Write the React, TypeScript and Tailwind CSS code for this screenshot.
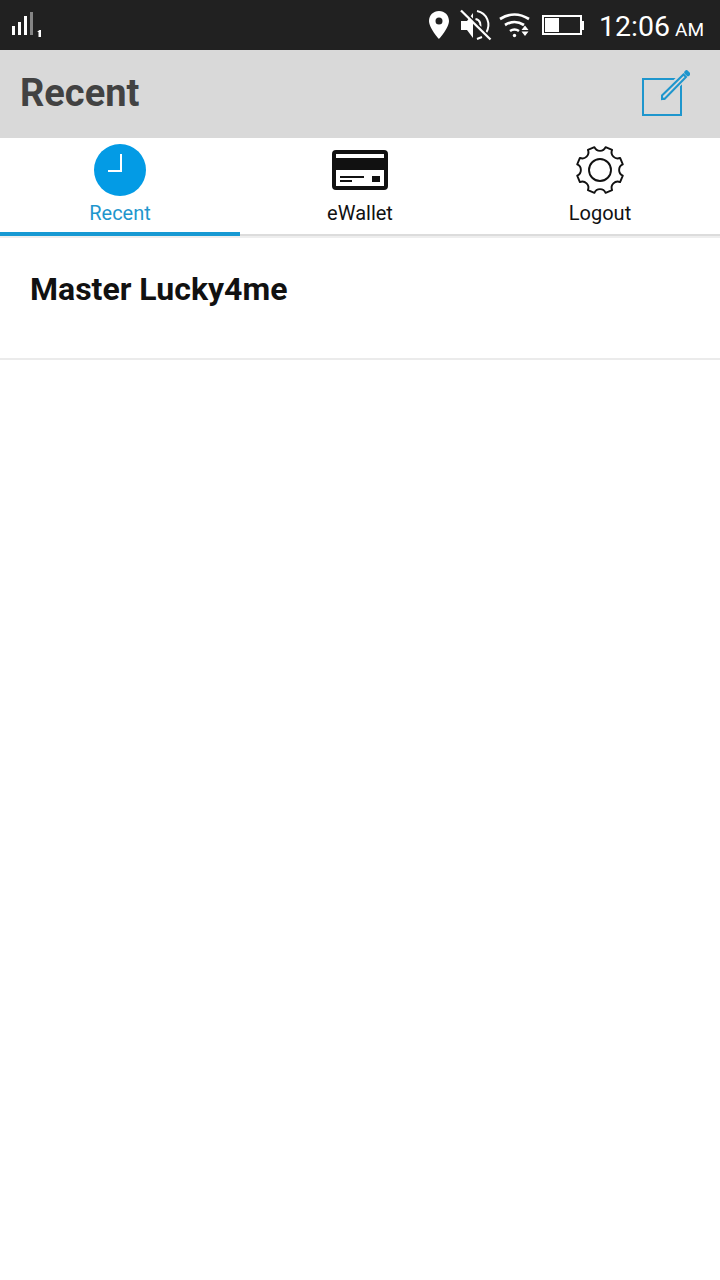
import React from 'react';

const ClockIcon = () => (
  <svg width="56" height="56" viewBox="0 0 56 56">
    <circle cx="28" cy="28" r="26" fill="#039be5" />
    <path d="M29 12v17H16" fill="none" stroke="#fff" strokeWidth="2" />
  </svg>
);

const CardIcon = () => (
  <svg width="56" height="56" viewBox="0 0 56 56" fill="#111">
    <rect x="2" y="10" width="52" height="36" rx="2" fill="#fff" stroke="#111" strokeWidth="4" />
    <path d="M3 16h50v12H3zM8 34h24v2H8zM8 38h12v2H8zM40 34h8v6h-8z" shapeRendering="crispEdges" />
  </svg>
);

const GearIcon = () => (
  <svg width="56" height="56" viewBox="0 0 56 56" fill="none" stroke="#111" strokeWidth="1.9" strokeLinejoin="round">
    <circle cx="28" cy="28" r="11" />
    <path d="M22.400 5.200A6.100 6.100 0 0 0 33.600 5.200L40.100 7.900A6.100 6.100 0 0 0 48.100 15.900L50.800 22.400A6.100 6.100 0 0 0 50.800 33.600L48.100 40.100A6.100 6.100 0 0 0 40.100 48.100L33.600 50.800A6.100 6.100 0 0 0 22.400 50.800L15.900 48.100A6.100 6.100 0 0 0 7.900 40.100L5.200 33.600A6.100 6.100 0 0 0 5.200 22.400L7.900 15.900A6.100 6.100 0 0 0 15.900 7.900Z" />
  </svg>
);

const ComposeIcon = () => (
  <svg width="50" height="50" viewBox="0 0 50 50" fill="none">
    <rect x="3" y="10" width="38" height="36" stroke="#1e96cd" strokeWidth="2" />
    <path d="M20 31L48 3" stroke="#d9d9d9" strokeWidth="9" />
    <path d="M22 30v-3.500L43.500 5.500l2.500 2.500L25 29.500z" stroke="#1e96cd" strokeWidth="2" />
    <path d="M21 26.500v4.500h4.500z" fill="#1e96cd" />
    <path d="M46.500 3.500l1.500 1.500" stroke="#1e96cd" strokeWidth="4.500" strokeLinecap="round" />
  </svg>
);

const tabs = [
  { name: 'Recent', icon: ClockIcon, active: true },
  { name: 'eWallet', icon: CardIcon, active: false },
  { name: 'Logout', icon: GearIcon, active: false },
];

const chats = ['Master Lucky4me'];

const StatusBar = () => (
  <div className="flex h-[50px] bg-[#212121] text-white">
    <svg width="60" height="50" fill="#fff">
      <path d="M12 26h3v9h-3zM18 22h3v13h-3zM24 16h3v19h-3z" />
      <path d="M30 12h3v23h-3z" fill="#858585" />
      <path d="M37.500 31.500l2-1.500H41v7h-2.500v-5h-1z" />
    </svg>
    <svg className="ml-auto" width="170" height="50" viewBox="420 0 170 50" fill="none" stroke="#fff" strokeWidth="2">
      <path d="M439 11c-5.700 0-10 4.300-10 10 0 7 10 18 10 18s10-11 10-18c0-5.700-4.300-10-10-10zm0 6.500a3.500 3.500 0 1 1 0 7 3.500 3.500 0 0 1 0-7z" fill="#fff" stroke="none" />
      <path d="M461 21h6l6-8v25l-6-8h-6z" fill="#fff" stroke="none" />
      <path d="M477 11c10 2 14.500 13 9 22M475.500 19c5 1 6 6 4 10M477 39l5-2" />
      <path d="M463 10l29 29" stroke="#212121" strokeWidth="2" />
      <path d="M461 10.500l29.500 29" strokeWidth="2.300" />
      <path d="M500 19q14.500-9 29 0M505 25q9.500-6 19 0M510 31q4.500-3 9 0" strokeWidth="2.700" />
      <circle cx="514.500" cy="35.500" r="1.700" fill="#fff" stroke="none" />
      <path d="M521.500 30l3.500-4.500 3.500 4.500zM521.500 31.500l3.500 4.500 3.500-4.500z" fill="#fff" stroke="none" />
      <path d="M543 16h38v18h-38z" />
      <path d="M545 18h14v14h-14zM582 21h2v9h-2z" fill="#fff" stroke="none" />
    </svg>
    <div className="flex w-[130px] items-baseline pt-[7px] pl-[9px] leading-10">
      <span className="text-[28.5px]">12:06</span>
      <span className="ml-[5px] text-[19px]">AM</span>
    </div>
  </div>
);

const App = () => {
  return (
    <div className="min-h-screen bg-white font-['Roboto',sans-serif] text-[#111]">
      <StatusBar />

      {/* Header */}
      <header className="flex h-[88px] items-center justify-between bg-[#d9d9d9] pr-[30px] pl-5">
        <h1 className="pb-0.5 text-[38px] font-bold text-[#424242]">Recent</h1>
        <button aria-label="Compose">
          <ComposeIcon />
        </button>
      </header>

      {/* Tabs */}
      <nav className="grid h-[100px] grid-cols-3 border-b-2 border-[#eee]">
        {tabs.map((tab) => {
          const Icon = tab.icon;
          return (
            <button
              key={tab.name}
              className={
                tab.active
                  ? 'flex flex-col items-center border-b-4 border-[#1799d3] pt-1 text-[#1e96cd]'
                  : 'flex flex-col items-center border-b-2 border-[#dcdcdc] pt-1'
              }
            >
              <Icon />
              <span className="text-[20px] leading-[30px]">{tab.name}</span>
            </button>
          );
        })}
      </nav>

      {/* Chat list */}
      <ul>
        {chats.map((chat) => (
          <li key={chat} className="h-[122px] border-b-2 border-[#ebebeb] px-[30px] pt-[29px]">
            <span className="text-[32px] leading-[44px] font-bold">{chat}</span>
          </li>
        ))}
      </ul>
    </div>
  );
};

export default App;
